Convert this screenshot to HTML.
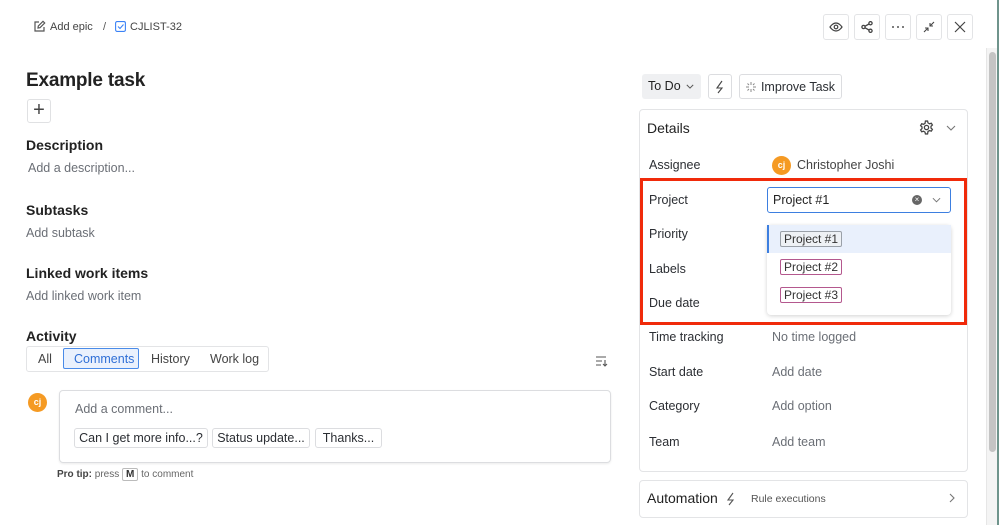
<!DOCTYPE html>
<html><head><meta charset="utf-8"><style>
*{box-sizing:border-box;margin:0;padding:0}
body{width:999px;height:525px;overflow:hidden;background:#fff;font-family:"Liberation Sans",sans-serif;color:#1f2328;position:relative}
.a{position:absolute;white-space:nowrap}
.h{font-size:14px;font-weight:bold;color:#222}
.g{font-size:12.5px;color:#6b6f76}
.lbl{font-size:12.5px;color:#2b2e33;left:649px}
.val{font-size:12.5px;color:#6b6f76;left:772px}
.ib{position:absolute;top:14px;width:26px;height:26px;border:1px solid #e3e4e6;border-radius:3px;display:flex;align-items:center;justify-content:center}
.btn{position:absolute;border:1px solid #dcdde0;border-radius:3px;font-size:12px;color:#2b2e33;display:flex;align-items:center;justify-content:center;background:#fff}
.tag{position:absolute;left:780px;height:16px;padding:0 3px;font-size:12px;line-height:14px;border-radius:2px;color:#333}
</style></head><body>
<svg class="a" style="left:33px;top:20px" width="13" height="13" viewBox="0 0 13 13" fill="none" stroke="#555" stroke-width="1.2"><path d="M6 2H2v9h9V7"/><path d="M5 8l.3-2L10 1.3l1.7 1.7L7 7.7z"/></svg>
<div class="a" style="left:50px;top:21px;font-size:11px;color:#444">Add epic</div>
<div class="a" style="left:103px;top:21px;font-size:11px;color:#555">/</div>
<svg class="a" style="left:115px;top:21px" width="11" height="11" viewBox="0 0 11 11" fill="none" stroke="#3b82f6" stroke-width="1.1"><rect x=".6" y=".6" width="9.8" height="9.8" rx="1.5"/><path d="M3 5.5l2 2 3.5-4"/></svg>
<div class="a" style="left:130px;top:21px;font-size:11px;color:#444">CJLIST-32</div>
<div class="a" style="left:26px;top:70px;font-size:19px;font-weight:bold;color:#222;letter-spacing:-.2px">Example task</div>
<div class="a" style="left:27px;top:99px;width:24px;height:24px;border:1px solid #e0e1e3;border-radius:3px;font-size:20px;line-height:21px;text-align:center;color:#444;font-weight:300">+</div>
<div class="a h" style="left:26px;top:137px">Description</div>
<div class="a g" style="left:28px;top:161px">Add a description...</div>
<div class="a h" style="left:26px;top:202px">Subtasks</div>
<div class="a g" style="left:26px;top:226px">Add subtask</div>
<div class="a h" style="left:26px;top:265px">Linked work items</div>
<div class="a g" style="left:26px;top:289px">Add linked work item</div>
<div class="a h" style="left:26px;top:328px">Activity</div>
<div class="a" style="left:26px;top:346px;width:243px;height:26px;border:1px solid #e3e4e6;border-radius:3px"></div>
<div class="a" style="left:63px;top:348px;width:76px;height:21px;border:1px solid #4a8be8;background:#eaf1fd;border-radius:2px"></div>
<div class="a" style="left:38px;top:352px;font-size:12.5px;color:#444">All</div>
<div class="a" style="left:74px;top:352px;font-size:12.5px;color:#2f6fd6">Comments</div>
<div class="a" style="left:151px;top:352px;font-size:12.5px;color:#444">History</div>
<div class="a" style="left:210px;top:352px;font-size:12.5px;color:#444">Work log</div>
<svg class="a" style="left:595px;top:355px" width="13" height="12" viewBox="0 0 13 12" fill="none" stroke="#555" stroke-width="1.1"><path d="M1 2h10M1 6h6M1 10h5M10 5v6M8 9l2 2 2-2"/></svg>
<div class="a" style="left:28px;top:393px;width:19px;height:19px;border-radius:50%;background:#f59a23;color:#fff;font-size:9px;font-weight:bold;text-align:center;line-height:18px">cj</div>
<div class="a" style="left:59px;top:390px;width:552px;height:73px;border:1px solid #dcdde0;border-radius:4px;box-shadow:0 1px 2px rgba(0,0,0,.08)"></div>
<div class="a g" style="left:75px;top:402px">Add a comment...</div>
<div class="btn" style="left:74px;top:428px;width:134px;height:20px;font-size:12.5px">Can I get more info...?</div>
<div class="btn" style="left:212px;top:428px;width:98px;height:20px;font-size:12.5px">Status update...</div>
<div class="btn" style="left:315px;top:428px;width:67px;height:20px;font-size:12.5px">Thanks...</div>
<div class="a" style="left:57px;top:469px;font-size:10px;color:#666"><b style="color:#444">Pro tip:</b> press <span style="border:1px solid #bbb;border-radius:2px;padding:0 3px;font-weight:bold;color:#333">M</span> to comment</div>
<div class="ib" style="left:823px"><svg width="14" height="10" viewBox="0 0 14 10" fill="none" stroke="#444" stroke-width="1.2"><path d="M1 5s2.5-4 6-4 6 4 6 4-2.5 4-6 4-6-4-6-4z"/><circle cx="7" cy="5" r="1.8"/></svg></div>
<div class="ib" style="left:854px"><svg width="12" height="12" viewBox="0 0 12 12" fill="none" stroke="#444" stroke-width="1.3"><circle cx="9.5" cy="2.2" r="1.6"/><circle cx="2.5" cy="6" r="1.6"/><circle cx="9.5" cy="9.8" r="1.6"/><path d="M4 5.2l4-2.2M4 6.8l4 2.2"/></svg></div>
<div class="ib" style="left:885px"><svg width="14" height="4" viewBox="0 0 14 4"><circle cx="2" cy="2" r="1" fill="#555"/><circle cx="7" cy="2" r="1" fill="#555"/><circle cx="12" cy="2" r="1" fill="#555"/></svg></div>
<div class="ib" style="left:916px"><svg width="12" height="12" viewBox="0 0 12 12" fill="none" stroke="#444" stroke-width="1.1"><path d="M1 11l4-4M2 7h3v3M11 1L7 5M7 2v3h3"/></svg></div>
<div class="ib" style="left:947px"><svg width="12" height="12" viewBox="0 0 12 12" fill="none" stroke="#444" stroke-width="1.2"><path d="M1 1l10 10M11 1L1 11"/></svg></div>
<div class="a" style="left:986px;top:48px;width:12px;height:477px;background:#f4f4f4;border-left:1px solid #e6e6e6"></div>
<div class="a" style="left:989px;top:52px;width:7px;height:400px;background:#c4c4c4;border-radius:4px"></div>
<div class="a" style="left:997px;top:0;width:2px;height:525px;background:#6f948c"></div>
<div class="a" style="left:642px;top:74px;width:59px;height:25px;background:#eff0f2;border-radius:3px;font-size:12.5px;line-height:25px;padding-left:6px;color:#222">To Do <svg width="8" height="5" viewBox="0 0 10 6" fill="none" stroke="#555" stroke-width="1.2" style="vertical-align:middle;margin-left:2px"><path d="M1 1l4 4 4-4"/></svg></div>
<div class="btn" style="left:708px;top:74px;width:24px;height:25px"><svg width="10" height="14" viewBox="0 0 10 14" fill="none" stroke="#444" stroke-width="1.1"><path d="M7 1L2 8h5l-4 5"/></svg></div>
<div class="btn" style="left:739px;top:74px;width:103px;height:25px;font-size:12.5px"><svg width="10" height="10" viewBox="0 0 10 10" fill="none" stroke="#888" stroke-width="1" style="margin-right:5px"><path d="M5 0v3M5 7v3M0 5h3M7 5h3M1.5 1.5l1.5 1.5M7 7l1.5 1.5M8.5 1.5L7 3M3 7L1.5 8.5"/></svg>Improve Task</div>
<div class="a" style="left:639px;top:109px;width:329px;height:363px;border:1px solid #e3e4e6;border-radius:4px"></div>
<div class="a" style="left:647px;top:120px;font-size:14px;color:#222">Details</div>
<svg class="a" style="left:919px;top:120px" width="15" height="15" viewBox="0 0 14 14" fill="none" stroke="#444" stroke-width="1.2"><circle cx="7" cy="7" r="2"/><path d="M6 1h2l.4 1.7 1.4.8 1.7-.5 1 1.7-1.3 1.2v1.6l1.3 1.2-1 1.7-1.7-.5-1.4.8L8 13H6l-.4-1.7-1.4-.8-1.7.5-1-1.7L2.8 8V6.4L1.5 5.2l1-1.7 1.7.5 1.4-.8z"/></svg>
<svg class="a" style="left:946px;top:125px" width="10" height="6" viewBox="0 0 10 6" fill="none" stroke="#777" stroke-width="1.1"><path d="M1 1l4 4 4-4"/></svg>
<div class="a lbl" style="top:158px">Assignee</div>
<div class="a" style="left:772px;top:156px;width:19px;height:19px;border-radius:50%;background:#f59a23;color:#fff;font-size:9px;font-weight:bold;text-align:center;line-height:18px">cj</div>
<div class="a" style="left:797px;top:158px;font-size:12.5px;color:#444">Christopher Joshi</div>
<div class="a lbl" style="top:193px">Project</div>
<div class="a lbl" style="top:227px">Priority</div>
<div class="a lbl" style="top:262px">Labels</div>
<div class="a lbl" style="top:296px">Due date</div>
<div class="a lbl" style="top:330px">Time tracking</div>
<div class="a val" style="top:330px">No time logged</div>
<div class="a lbl" style="top:365px">Start date</div>
<div class="a val" style="top:365px">Add date</div>
<div class="a lbl" style="top:399px">Category</div>
<div class="a val" style="top:399px">Add option</div>
<div class="a lbl" style="top:435px">Team</div>
<div class="a val" style="top:435px">Add team</div>
<div class="a" style="left:767px;top:187px;width:184px;height:26px;border:1.5px solid #3d7fe0;border-radius:3px"></div>
<div class="a" style="left:773px;top:193px;font-size:12.5px;color:#222">Project #1</div>
<div class="a" style="left:912px;top:195px;width:10px;height:10px;border-radius:50%;background:#666;color:#fff;font-size:8px;line-height:10px;text-align:center">×</div>
<svg class="a" style="left:932px;top:197px" width="9" height="6" viewBox="0 0 10 6" fill="none" stroke="#777" stroke-width="1.1"><path d="M1 1l4 4 4-4"/></svg>
<div class="a" style="left:767px;top:225px;width:184px;height:90px;background:#fff;border-radius:4px;box-shadow:0 1px 4px rgba(0,0,0,.18)"></div>
<div class="a" style="left:767px;top:225px;width:184px;height:28px;background:#e9f0fc;border-left:2px solid #3d7fe0"></div>
<div class="tag" style="top:231px;border:1px solid #9aa0a8;background:#eef1f5">Project #1</div>
<div class="tag" style="top:259px;border:1px solid #b4588e">Project #2</div>
<div class="tag" style="top:287px;border:1px solid #b4588e">Project #3</div>
<div class="a" style="left:640px;top:178px;width:327px;height:147px;border:3px solid #f02a0a"></div>
<div class="a" style="left:639px;top:480px;width:329px;height:38px;border:1px solid #e3e4e6;border-radius:4px"></div>
<div class="a" style="left:647px;top:490px;font-size:14px;color:#222">Automation</div>
<svg class="a" style="left:726px;top:492px" width="10" height="14" viewBox="0 0 10 14" fill="none" stroke="#555" stroke-width="1.1"><path d="M7 1L2 8h5l-4 5"/></svg>
<div class="a" style="left:751px;top:493px;font-size:10.5px;color:#555">Rule executions</div>
<svg class="a" style="left:949px;top:493px" width="6" height="10" viewBox="0 0 6 10" fill="none" stroke="#777" stroke-width="1.1"><path d="M1 1l4 4-4 4"/></svg>
</body></html>
